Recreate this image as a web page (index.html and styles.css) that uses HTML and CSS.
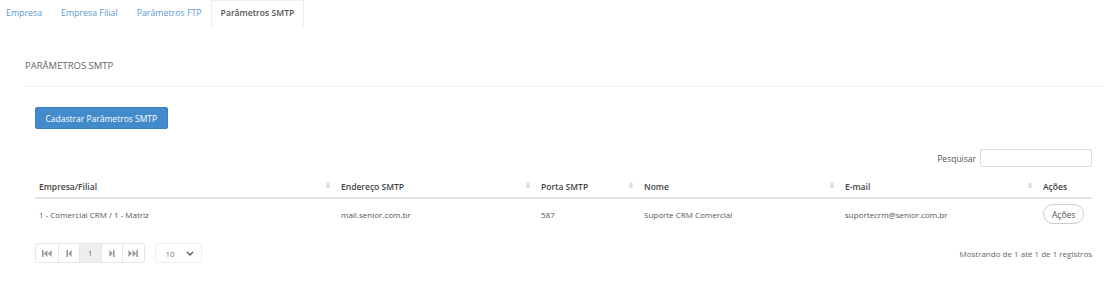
FILE: index.html
```html
<!DOCTYPE html>
<html lang="pt-BR">
<head>
    <meta charset="UTF-8">
    <title>Parâmetros SMTP</title>
    <link rel="stylesheet" href="styles.css">
</head>
<body>
    <nav class="tabs">
        <a class="tab" href="#">Empresa</a>
        <a class="tab" href="#">Empresa Filial</a>
        <a class="tab" href="#">Parâmetros FTP</a>
        <a class="tab active" href="#">Parâmetros SMTP</a>
    </nav>

    <main class="panel">
        <h2 class="panel-title">PARÂMETROS SMTP</h2>

        <section class="panel-body">
            <button class="btn-primary">Cadastrar Parâmetros SMTP</button>

            <div class="search">
                <label for="search-input">Pesquisar</label>
                <input type="text" id="search-input">
            </div>

            <table class="grid">
                <colgroup>
                    <col style="width: 302px">
                    <col style="width: 200px">
                    <col style="width: 103px">
                    <col style="width: 201px">
                    <col style="width: 198px">
                    <col>
                </colgroup>
                <thead>
                    <tr>
                        <th class="sortable">Empresa/Filial</th>
                        <th class="sortable">Endereço SMTP</th>
                        <th class="sortable">Porta SMTP</th>
                        <th class="sortable">Nome</th>
                        <th class="sortable">E-mail</th>
                        <th>Ações</th>
                    </tr>
                </thead>
                <tbody>
                    <tr>
                        <td>1 - Comercial CRM / 1 - Matriz</td>
                        <td>mail.senior.com.br</td>
                        <td>587</td>
                        <td>Suporte CRM Comercial</td>
                        <td>suportecrm@senior.com.br</td>
                        <td><button class="btn-actions">Ações</button></td>
                    </tr>
                </tbody>
            </table>

            <div class="footer">
                <div class="pager">
                    <ul class="pages">
                        <li>
                            <svg width="10" height="7" viewBox="0 0 10 7"><rect x="0" y="0" width="1.6" height="7" fill="#999"/><path d="M5.4 0 L1.8 3.5 L5.4 7 Z M9.6 0 L6 3.5 L9.6 7 Z" fill="#999"/></svg>
                        </li>
                        <li>
                            <svg width="6" height="7" viewBox="0 0 6 7"><rect x="0.4" y="0" width="1.6" height="7" fill="#999"/><path d="M5.6 0 L2.2 3.5 L5.6 7 Z" fill="#999"/></svg>
                        </li>
                        <li class="current">1</li>
                        <li>
                            <svg width="6" height="7" viewBox="0 0 6 7"><path d="M0.4 0 L3.8 3.5 L0.4 7 Z" fill="#999"/><rect x="4" y="0" width="1.6" height="7" fill="#999"/></svg>
                        </li>
                        <li>
                            <svg width="10" height="7" viewBox="0 0 10 7"><path d="M0.4 0 L4 3.5 L0.4 7 Z M4.6 0 L8.2 3.5 L4.6 7 Z" fill="#999"/><rect x="8.4" y="0" width="1.6" height="7" fill="#999"/></svg>
                        </li>
                    </ul>
                    <div class="page-size">
                        <span>10</span>
                        <svg width="8" height="5" viewBox="0 0 8 5"><path d="M1 1 L4 4 L7 1" fill="none" stroke="#555" stroke-width="1.4"/></svg>
                    </div>
                </div>
                <p class="info">Mostrando de 1 até 1 de 1 registros</p>
            </div>
        </section>
    </main>
</body>
</html>
```

FILE: styles.css
```css
*{
    box-sizing: border-box;
}

body{
    margin: 0;
    background-color: #fff;
    color: #555;
    font-family: 'Open Sans', 'Noto Sans', sans-serif;
    font-size: 8px;
}

/* tabs */
.tabs{
    display: flex;
    height: 27px;
}

.tab{
    display: flex;
    align-items: center;
    padding: 0 8.5px 2px;
    color: #5b9bd5;
    text-decoration: none;
    font-size: 8.8px;
    border: 1px solid transparent;
    border-bottom: none;
}

.tab:first-child{
    padding-left: 5px;
}

.tab.active{
    color: #555;
    font-weight: 600;
    font-size: 8.6px;
    border-color: #eee;
}

/* panel */
.panel{
    padding: 0 8px 0 25px;
}

.panel-title{
    margin: 0;
    padding: 32px 0 14px;
    font-size: 9.5px;
    font-weight: normal;
    color: #666;
    border-bottom: 1px solid #f0f0f0;
}

.panel-body{
    padding: 20px 10px 0 10px;
}

.btn-primary{
    background-color: #428bca;
    border: 1px solid #3b7fbb;
    border-radius: 2px;
    color: #fff;
    font-family: inherit;
    font-size: 8.5px;
    height: 22px;
    padding: 0 9.5px;
}

.search{
    display: flex;
    justify-content: flex-end;
    align-items: center;
    gap: 4px;
    margin-top: 20px;
    color: #555;
    font-size: 8.5px;
}

.search input{
    width: 112px;
    height: 18px;
    border: 1px solid #ddd;
    border-radius: 2px;
}

/* table */
.grid{
    width: 100%;
    table-layout: fixed;
    border-collapse: collapse;
    margin-top: 8px;
}

.grid th{
    text-align: left;
    font-weight: 600;
    color: #444;
    font-size: 8.5px;
    padding: 6px 4px 5px;
    border-bottom: 2px solid #e4e4e4;
    position: relative;
}

.grid th.sortable::after{
    content: "⇳";
    position: absolute;
    right: 6px;
    top: 6px;
    color: #ccc;
    font-size: 7px;
}

.grid td{
    padding: 5px 4px 2px;
    font-size: 8px;
    color: #555;
    height: 27px;
}

.btn-actions{
    background: #fff;
    border: 1px solid #ccc;
    border-radius: 10px;
    font-family: inherit;
    font-size: 8.5px;
    color: #555;
    height: 20px;
    padding: 0 8px;
}

/* footer */
.footer{
    display: flex;
    justify-content: space-between;
    align-items: center;
    margin-top: 17px;
}

.pager{
    display: flex;
    align-items: center;
    gap: 10px;
}

.pages{
    display: flex;
    margin: 0;
    padding: 0;
    list-style: none;
    border: 1px solid #e6e6e6;
    border-radius: 2px;
    height: 20px;
}

.pages li{
    width: 21.5px;
    display: flex;
    align-items: center;
    justify-content: center;
    border-left: 1px solid #e6e6e6;
    color: #666;
    font-size: 7.5px;
}

.pages li:first-child{
    border-left: none;
}

.pages li.current{
    background-color: #eee;
}

.page-size{
    display: flex;
    align-items: center;
    justify-content: space-between;
    width: 47px;
    height: 20px;
    padding: 0 7px 0 10px;
    border: 1px solid #eee;
    border-radius: 2px;
    color: #777;
    font-size: 8px;
}

.info{
    margin: 0;
    color: #666;
    font-size: 8px;
}
```
